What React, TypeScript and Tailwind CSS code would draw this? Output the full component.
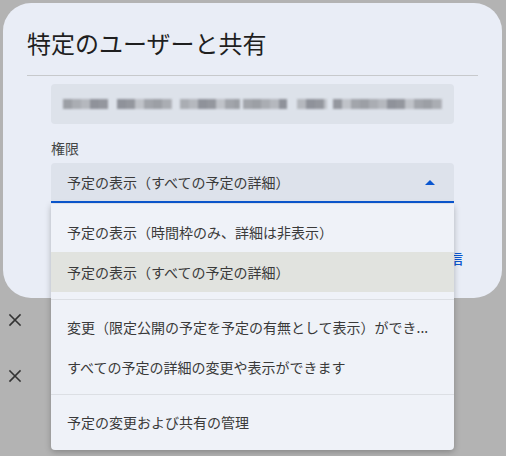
import React from "react";

const shades = [
  "bg-[#a2a5ab]",
  "bg-[#94979e]",
  "bg-[#b5b8be]",
  "bg-[#9c9fa5]",
  "bg-[#c0c3c9]",
  "bg-[#8f929a]",
  "bg-[#aaadb3]",
];

const segments = [
  { w: "w-[45px]", ml: "ml-0", n: 5 },
  { w: "w-[55px]", ml: "ml-[9px]", n: 7 },
  { w: "w-[60px]", ml: "ml-[8px]", n: 7 },
  { w: "w-[44px]", ml: "ml-[3px]", n: 5 },
  { w: "w-[30px]", ml: "ml-[10px]", n: 4 },
  { w: "w-[109px]", ml: "ml-[6px]", n: 13 },
];

function XIcon() {
  return (
    <svg width="16" height="16" viewBox="0 0 16 16" fill="none">
      <path d="M3 3L13 13M13 3L3 13" stroke="#333333" strokeWidth="1.6" strokeLinecap="square" />
    </svg>
  );
}

function MenuItem({ text, active }: { text: string; active?: boolean }) {
  return (
    <div
      className={
        "h-10 px-4 flex items-center text-[14px] text-[#3a3a3a] whitespace-nowrap " +
        (active ? "bg-[#e1e3df]" : "")
      }
    >
      <span>{text}</span>
    </div>
  );
}

export default function App() {
  let k = 0;
  return (
    <div className="w-[506px] h-[456px] bg-[#b3b3b3] overflow-hidden pt-[3px] pl-[3px] font-['Noto_Sans_CJK_JP',sans-serif]">
      <div className="w-[499px] h-[295px] rounded-[28px] bg-[#e9edf6] px-6 pt-6 flex flex-col relative">
        <div className="h-8 leading-8 text-[24px] text-[#1f1f1f] whitespace-nowrap">
          特定のユーザーと共有
        </div>
        <div className="mt-4 h-px bg-[#c7c9cc]" />
        <div className="px-6 flex flex-col">
          <div className="mt-2 h-10 rounded-[4px] bg-[#dde2ea] flex items-center px-3">
            <div className="flex items-center blur-[1px]">
              {segments.map((s, i) => (
                <div key={i} className={"flex h-[10px] overflow-hidden " + s.w + " " + s.ml}>
                  {Array.from({ length: s.n }).map((_, j) => {
                    k++;
                    return (
                      <div
                        key={j}
                        className={"w-[9px] h-[10px] shrink-0 " + shades[(k * 3 + i) % shades.length]}
                      />
                    );
                  })}
                </div>
              ))}
            </div>
          </div>
          <div className="mt-[14px] h-5 leading-5 text-[14px] text-[#444746]">権限</div>
          <div className="relative mt-[5px]">
            <div className="h-10 rounded-t-[4px] bg-[#dde2eb] border-b-2 border-[#0b57d0] flex items-center justify-between pl-4 pr-[19px]">
              <span className="text-[14px] text-[#3a3a3a]">予定の表示（すべての予定の詳細）</span>
              <svg width="10" height="5" viewBox="0 0 10 5">
                <path d="M0 5L5 0L10 5Z" fill="#0b57d0" />
              </svg>
            </div>
            <div className="absolute left-0 right-0 top-[calc(100%+1px)] z-10 bg-[#eff2f8] rounded-b-[4px] py-2 shadow-[0_2px_6px_rgba(0,0,0,0.25)]">
              <MenuItem text="予定の表示（時間枠のみ、詳細は非表示）" />
              <MenuItem text="予定の表示（すべての予定の詳細）" active />
              <div className="my-[7px] h-px bg-[#dcdfe4]" />
              <MenuItem text="変更（限定公開の予定を予定の有無として表示）ができ..." />
              <MenuItem text="すべての予定の詳細の変更や表示ができます" />
              <div className="my-[7px] h-px bg-[#dcdfe4]" />
              <MenuItem text="予定の変更および共有の管理" />
            </div>
          </div>
        </div>
        <div className="mt-[35px] flex justify-end gap-2">
          <div className="h-10 px-[15px] flex items-center text-[14px] font-medium text-[#0b57d0]">キャンセル</div>
          <div className="h-10 px-[15px] flex items-center text-[14px] font-medium text-[#0b57d0]">送信</div>
        </div>
      </div>
      <div className="flex flex-col pl-[4px] mt-[14px] gap-10">
        <XIcon />
        <XIcon />
      </div>
    </div>
  );
}
